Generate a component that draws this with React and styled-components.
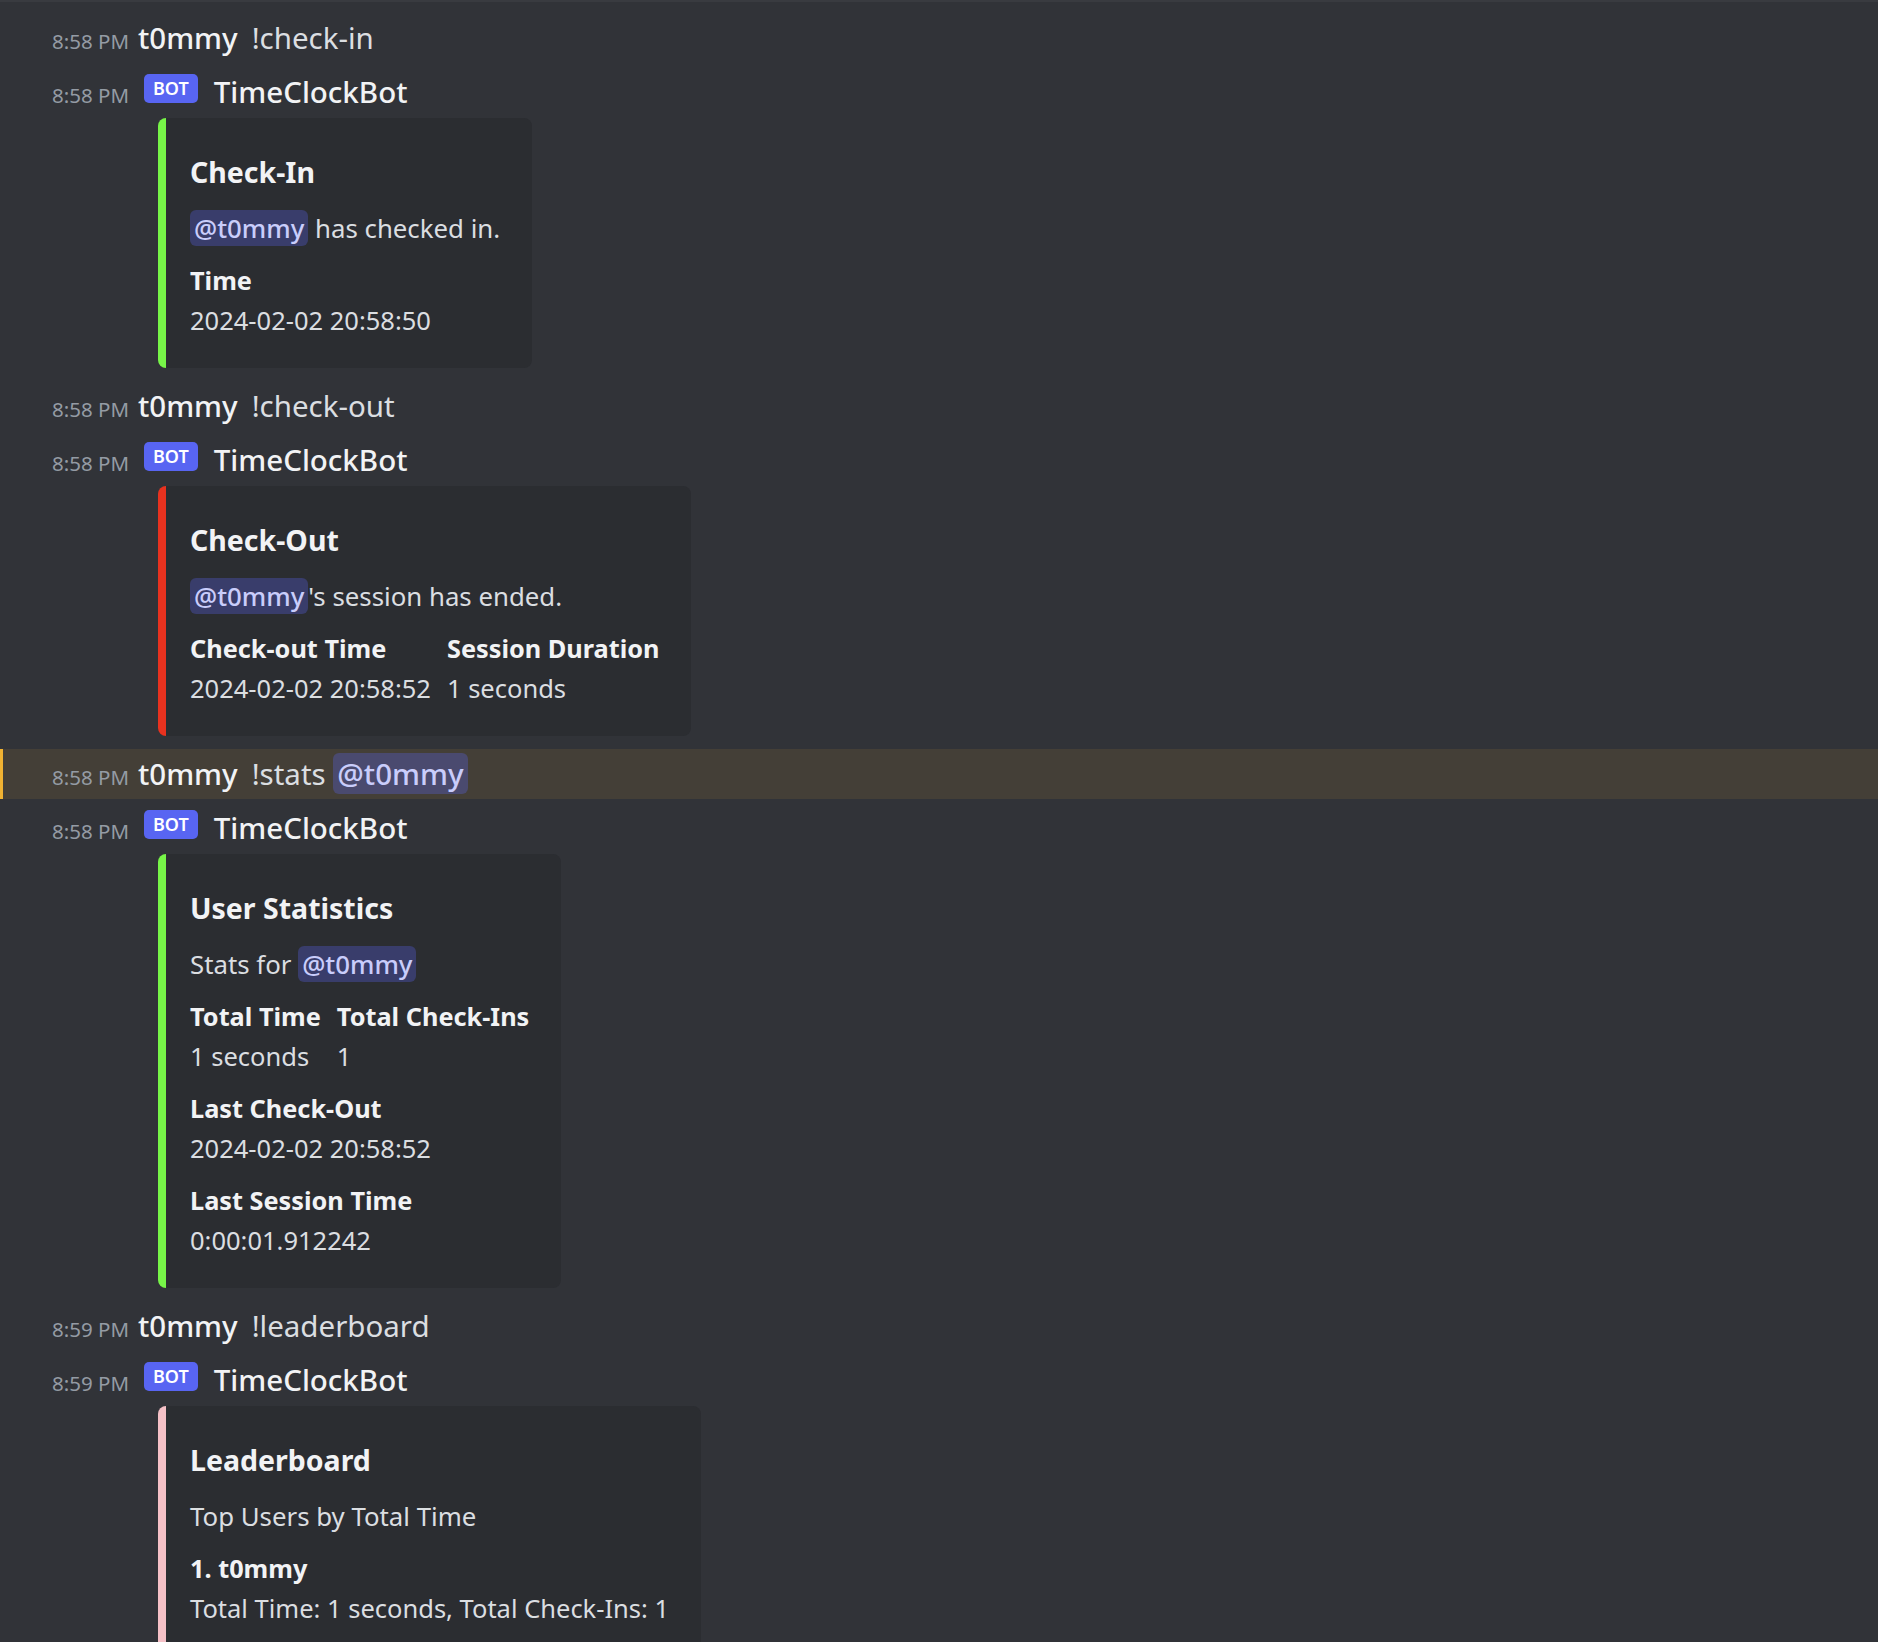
import React from "react";
import styled, { createGlobalStyle } from "styled-components";

const GlobalStyle = createGlobalStyle`
  html, body {
    margin: 0;
    padding: 0;
    overflow: hidden;
    background: #313338;
  }
  body {
    font-family: "Noto Sans", "Liberation Sans", sans-serif;
    -webkit-font-smoothing: antialiased;
  }
`;

const Chat = styled.div`
  display: flex;
  flex-direction: column;
  gap: 4px;
  min-height: 100vh;
  padding-top: 11px;
  border-top: 2px solid #393b40;
  box-sizing: border-box;
`;

const Message = styled.div`
  padding: 3px 0 3px 52px;
  background: ${({ $highlight }) => ($highlight ? "#443f37" : "transparent")};
  box-shadow: ${({ $highlight }) =>
    $highlight ? "inset 3px 0 0 #f0b232" : "none"};
`;

const Header = styled.div`
  display: flex;
  align-items: baseline;
  height: 44px;
  line-height: 44px;
  white-space: nowrap;
`;

const Timestamp = styled.span`
  flex-shrink: 0;
  width: 86px;
  font-size: 20.5px;
  color: #949ba4;
`;

const BotTag = styled.span`
  align-self: center;
  display: inline-flex;
  align-items: center;
  height: 29px;
  margin: 0 16px 7px 6px;
  padding: 0 9px;
  border-radius: 5px;
  background: #5865f2;
  color: #fff;
  font-size: 18px;
  font-weight: 600;
  line-height: 29px;
`;

const Username = styled.span`
  font-size: 29.5px;
  font-weight: 500;
  color: #f2f3f5;
  margin-right: ${({ $bot }) => ($bot ? "0" : "14px")};
`;

const Content = styled.span`
  font-size: 29.5px;
  color: #dbdee1;
`;

const Mention = styled.span`
  padding: 0 4px;
  border-radius: 6px;
  background: rgba(88, 101, 242, 0.3);
  color: #c9cdfb;
  font-weight: 500;
`;

const Accessories = styled.div`
  padding: 4px 0 6px 106px;
`;

const Embed = styled.div`
  display: inline-flex;
  flex-direction: column;
  box-sizing: border-box;
  padding: 16px 32px 30px 24px;
  border-left: 8px solid ${({ $color }) => $color};
  border-radius: 8px;
  background: #2b2d31;
`;

const EmbedTitle = styled.div`
  margin-top: 16px;
  font-size: 28.5px;
  font-weight: 700;
  line-height: 44px;
  color: #f2f3f5;
  white-space: nowrap;
`;

const EmbedDescription = styled.div`
  margin-top: 16px;
  font-size: 25.8px;
  line-height: 36px;
  color: #dbdee1;
  white-space: nowrap;
`;

const Fields = styled.div`
  display: flex;
  flex-direction: column;
  gap: 16px;
  margin-top: 16px;
`;

const FieldRow = styled.div`
  display: flex;
  gap: 16px;
`;

const Field = styled.div`
  display: flex;
  flex-direction: column;
  gap: 4px;
  white-space: nowrap;
`;

const FieldName = styled.div`
  font-size: 25.3px;
  font-weight: 700;
  line-height: 36px;
  color: #f2f3f5;
`;

const FieldValue = styled.div`
  font-size: 25.5px;
  line-height: 36px;
  color: #dbdee1;
`;

const GREEN = "#77f548";
const RED = "#e8321f";
const PINK = "#f5c1c7";

const messages = [
  { time: "8:58 PM", text: "!check-in" },
  {
    time: "8:58 PM",
    bot: true,
    embed: {
      color: GREEN,
      title: "Check-In",
      description: (
        <>
          <Mention>@t0mmy</Mention> has checked in.
        </>
      ),
      rows: [[{ name: "Time", value: "2024-02-02 20:58:50" }]],
    },
  },
  { time: "8:58 PM", text: "!check-out" },
  {
    time: "8:58 PM",
    bot: true,
    embed: {
      color: RED,
      title: "Check-Out",
      description: (
        <>
          <Mention>@t0mmy</Mention>'s session has ended.
        </>
      ),
      rows: [
        [
          { name: "Check-out Time", value: "2024-02-02 20:58:52" },
          { name: "Session Duration", value: "1 seconds" },
        ],
      ],
    },
  },
  {
    time: "8:58 PM",
    highlight: true,
    text: (
      <>
        !stats <Mention>@t0mmy</Mention>
      </>
    ),
  },
  {
    time: "8:58 PM",
    bot: true,
    embed: {
      color: GREEN,
      title: "User Statistics",
      description: (
        <>
          Stats for <Mention>@t0mmy</Mention>
        </>
      ),
      rows: [
        [
          { name: "Total Time", value: "1 seconds" },
          { name: "Total Check-Ins", value: "1" },
        ],
        [{ name: "Last Check-Out", value: "2024-02-02 20:58:52" }],
        [{ name: "Last Session Time", value: "0:00:01.912242" }],
      ],
    },
  },
  { time: "8:59 PM", text: "!leaderboard" },
  {
    time: "8:59 PM",
    bot: true,
    embed: {
      color: PINK,
      title: "Leaderboard",
      description: "Top Users by Total Time",
      rows: [
        [
          {
            name: "1. t0mmy",
            value: "Total Time: 1 seconds, Total Check-Ins: 1",
          },
        ],
      ],
    },
  },
];

const BotEmbed = ({ embed }) => (
  <Embed $color={embed.color}>
    <EmbedTitle>{embed.title}</EmbedTitle>
    <EmbedDescription>{embed.description}</EmbedDescription>
    <Fields>
      {embed.rows.map((row, i) => (
        <FieldRow key={i}>
          {row.map((f) => (
            <Field key={f.name}>
              <FieldName>{f.name}</FieldName>
              <FieldValue>{f.value}</FieldValue>
            </Field>
          ))}
        </FieldRow>
      ))}
    </Fields>
  </Embed>
);

const App = () => {
  return (
    <>
      <GlobalStyle />
      <Chat>
        {messages.map((m, i) => (
          <Message key={i} $highlight={m.highlight}>
            <Header>
              <Timestamp>{m.time}</Timestamp>
              {m.bot && <BotTag>BOT</BotTag>}
              <Username $bot={m.bot}>{m.bot ? "TimeClockBot" : "t0mmy"}</Username>
              {m.text && <Content>{m.text}</Content>}
            </Header>
            {m.embed && (
              <Accessories>
                <BotEmbed embed={m.embed} />
              </Accessories>
            )}
          </Message>
        ))}
      </Chat>
    </>
  );
};

export default App;
